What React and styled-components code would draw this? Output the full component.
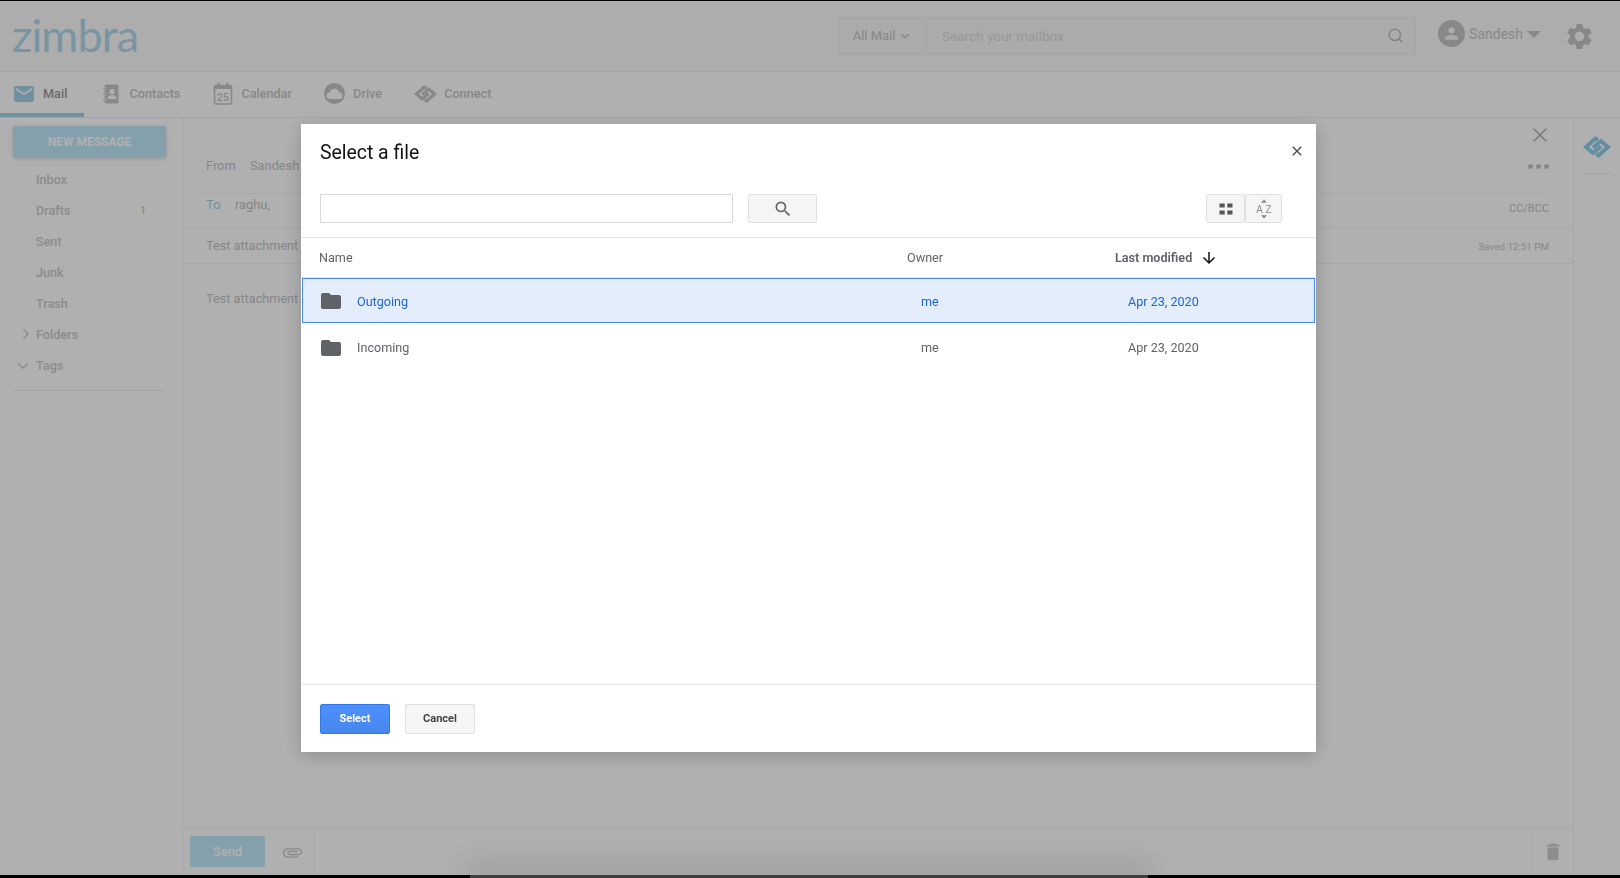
import React from 'react';
import styled, { createGlobalStyle } from 'styled-components';
import { MdEmail, MdFolder, MdSearch, MdClose, MdArrowDownward, MdDelete, MdSettings, MdPerson, MdAttachFile } from 'react-icons/md';
import { FiChevronRight, FiChevronDown, FiSearch, FiX } from 'react-icons/fi';

const GlobalStyle = createGlobalStyle`
  html, body {
    margin: 0;
    padding: 0;
    background: #000;
  }
  body {
    font-family: Roboto, "Liberation Sans", sans-serif;
  }
`;

const Page = styled.div`
  width: 1620px;
  height: 878px;
  display: flex;
  flex-direction: column;
  overflow: hidden;
  background: #fff;
  border-top: 1px solid #000;
  border-bottom: 3px solid #000;
  box-sizing: border-box;
`;

const Header = styled.header`
  height: 71px;
  flex: none;
  display: flex;
  align-items: center;
  box-sizing: border-box;
  padding: 0 25px 0 12px;
  background: #fbfbfb;
  border-bottom: 1px solid #f0f0f0;
  box-shadow: 0 1px 3px rgba(0, 0, 0, 0.04);
`;

const Logo = styled.div`
  font-family: Lato, sans-serif;
  font-weight: 400;
  font-size: 45px;
  line-height: 1;
  letter-spacing: -0.9px;
  color: #b0d8ec;
  margin-top: -2px;
  flex: 1;
`;

const SearchGroup = styled.div`
  width: 578px;
  height: 38px;
  display: flex;
  align-items: center;
  box-sizing: border-box;
  border: 1px solid #f0f0f0;
  background: #f8f8f8;
  margin-top: -1px;
`;

const Scope = styled.div`
  width: 88px;
  height: 100%;
  flex: none;
  display: flex;
  align-items: center;
  justify-content: center;
  gap: 3px;
  font-size: 13px;
  color: #c4c4c4;
  border-right: 1px solid #f0f0f0;
  box-sizing: border-box;
`;

const SearchText = styled.div`
  flex: 1;
  padding-left: 15px;
  font-size: 13.5px;
  color: #dcdcdc;
`;

const SearchIcon = styled.span`
  display: flex;
  margin-right: 11px;
  color: #bdbdbd;
`;

const User = styled.div`
  display: flex;
  align-items: center;
  margin-left: 22px;
  color: #c6c6c6;
  font-size: 14px;
  margin-top: -5px;
`;

const Avatar = styled.div`
  width: 27px;
  height: 27px;
  border-radius: 50%;
  background: #c6c6c6;
  color: #f8f8f8;
  display: flex;
  align-items: center;
  justify-content: center;
  margin-right: 4px;
`;

const Caret = styled.span`
  width: 0;
  height: 0;
  margin-left: 4px;
  margin-top: 2px;
  border-left: 7px solid transparent;
  border-right: 7px solid transparent;
  border-top: 7px solid #c6c6c6;
`;

const GearWrap = styled.div`
  display: flex;
  margin-left: 23px;
  color: #c6c6c6;
`;

const TabBar = styled.nav`
  height: 46px;
  flex: none;
  display: flex;
  background: #fff;
  border-bottom: 1px solid #f0f0f0;
  box-sizing: border-box;
`;

const Tab = styled.div`
  height: 100%;
  box-sizing: border-box;
  display: flex;
  align-items: center;
  padding: 2px ${(p) => p.$right || 15}px 0 ${(p) => p.$left}px;
  gap: ${(p) => p.$gap}px;
  font-size: 12.7px;
  font-weight: 500;
  color: ${(p) => (p.$active ? '#9a9a9a' : '#c6c6c6')};
  border-bottom: 4px solid ${(p) => (p.$active ? '#a6d3e8' : 'transparent')};
  & svg { flex: none; }
`;

const Main = styled.div`
  flex: 1;
  min-height: 0;
  display: flex;
`;

const Sidebar = styled.aside`
  width: 183px;
  flex: none;
  box-sizing: border-box;
  border-right: 1px solid #f4f4f4;
  padding: 8px 16px 0 13px;
`;

const NewMessage = styled.button`
  width: 153px;
  height: 32px;
  border: 0;
  border-radius: 2px;
  background: #bfe8fa;
  color: #fff;
  font: 700 12px Roboto, sans-serif;
  box-shadow: 0 1px 4px rgba(0, 0, 0, 0.15);
  margin-bottom: 6px;
`;

const NavItem = styled.div`
  height: 31px;
  display: flex;
  align-items: center;
  padding: 0 20px 0 23px;
  font-size: 12.6px;
  font-weight: 500;
  color: #cbcbcb;
  position: relative;
`;

const Count = styled.span`
  margin-left: auto;
  font-size: 10px;
`;

const Chevron = styled.span`
  position: absolute;
  left: ${(p) => p.$left}px;
  top: ${(p) => p.$top}px;
  display: flex;
  color: #c4c4c4;
`;

const NavRule = styled.div`
  height: 1px;
  background: #f0f0f0;
  margin-top: 9px;
`;

const Compose = styled.section`
  flex: 1;
  min-width: 0;
  display: flex;
  flex-direction: column;
`;

const FromRow = styled.div`
  height: 76px;
  flex: none;
  box-sizing: border-box;
  margin: 0 24px 0 23px;
  padding-top: 20px;
  display: flex;
  align-items: center;
  font-size: 12.8px;
  color: #c4c4c4;
  border-bottom: 1px solid #f2f2f2;
`;

const ToRow = styled.div`
  height: 33px;
  flex: none;
  box-sizing: border-box;
  margin: 0 24px 0 23px;
  padding-bottom: 12px;
  display: flex;
  align-items: center;
  font-size: 12.8px;
  color: #c4c4c4;
`;

const FieldLabel = styled.span`
  width: ${(p) => p.$width}px;
  font-size: ${(p) => p.$size || 12.8}px;
  color: ${(p) => p.$color || 'inherit'};
`;

const EndNote = styled.span`
  margin-left: auto;
  margin-top: ${(p) => p.$top || 0}px;
  font-size: ${(p) => p.$size}px;
`;

const ComposeTools = styled.div`
  margin-left: auto;
  margin-top: -40px;
  display: flex;
  flex-direction: column;
  align-items: flex-end;
  color: #b0b0b0;
  gap: 17px;
  & > svg { margin-right: -3px; }
`;

const Dots = styled.div`
  display: flex;
  gap: 3px;
  & i {
    width: 5px;
    height: 5px;
    border-radius: 50%;
    background: #c4c4c4;
  }
`;

const SubjectRow = styled.div`
  height: 37px;
  flex: none;
  display: flex;
  align-items: center;
  padding: 0 24px 1px 23px;
  font-size: 12.7px;
  color: #c4c4c4;
  border-top: 1px solid #f2f2f2;
  border-bottom: 1px solid #f2f2f2;
  box-sizing: border-box;
`;

const Body = styled.div`
  flex: 1;
  padding: 27px 23px;
  font-size: 12.7px;
  color: #c4c4c4;
`;

const ComposeFoot = styled.div`
  height: 46px;
  flex: none;
  display: flex;
  align-items: stretch;
  border-top: 1px solid #f4f4f4;
`;

const FootLeft = styled.div`
  width: 132px;
  box-sizing: border-box;
  display: flex;
  align-items: center;
  padding-left: 7px;
  gap: 17px;
  border-right: 1px solid #f4f4f4;
  color: #c6c6c6;
`;

const SendButton = styled.button`
  width: 75px;
  height: 31px;
  border: 0;
  border-radius: 2px;
  background: #bfe8fa;
  color: #fff;
  font: 500 13px Roboto, sans-serif;
  margin-top: -1px;
`;

const Clip = styled(MdAttachFile)`
  transform: rotate(90deg);
`;

const FootRight = styled.div`
  margin-left: auto;
  width: 40px;
  display: flex;
  align-items: center;
  justify-content: center;
  border-left: 1px solid #f4f4f4;
  color: #cccccc;
`;

const Rail = styled.aside`
  width: 47px;
  flex: none;
  box-sizing: border-box;
  border-left: 1px solid #f2f2f2;
  padding-top: 18px;
  display: flex;
  flex-direction: column;
  align-items: center;
`;

const RailRule = styled.div`
  width: 30px;
  height: 1px;
  background: #f0f0f0;
  margin-top: 15px;
`;

/* everything from here on lies over the page */
const Overlay = styled.div`
  position: fixed;
  inset: 1px 0 3px 0;
  background: rgba(0, 0, 0, 0.31);
  padding: 123px 0 0 301px;
  box-sizing: border-box;
`;

const Dialog = styled.div`
  width: 1015px;
  height: 628px;
  background: #fff;
  box-shadow: 0 4px 18px rgba(0, 0, 0, 0.2);
  display: flex;
  flex-direction: column;
  position: relative;
  color: #5f6368;
`;

const Title = styled.h2`
  margin: 0;
  padding: 17px 19px 0;
  height: 70px;
  box-sizing: border-box;
  font-size: 19.4px;
  font-weight: 400;
  line-height: 24px;
  color: #111;
`;

const CloseButton = styled.button`
  position: absolute;
  top: 18px;
  right: 10px;
  width: 18px;
  height: 18px;
  padding: 0;
  border: 0;
  background: none;
  color: #4a4a4a;
  display: flex;
  align-items: center;
  justify-content: center;
`;

const Toolbar = styled.div`
  height: 43px;
  flex: none;
  display: flex;
  align-items: flex-start;
  padding: 0 33px 0 19px;
  border-bottom: 1px solid #e5e5e5;
`;

const FileSearch = styled.input`
  width: 413px;
  height: 29px;
  box-sizing: border-box;
  border: 1px solid #d9d9d9;
  outline: 0;
  margin: 0 15px 0 0;
`;

const GreyButton = styled.button`
  width: ${(p) => p.$width}px;
  height: 29px;
  box-sizing: border-box;
  border: 1px solid #e0e0e0;
  border-radius: 2px;
  background: #f5f5f5;
  color: #666;
  padding: 0;
  display: flex;
  align-items: center;
  justify-content: center;
  margin-left: ${(p) => p.$left || 0}px;
`;

const Row = styled.div`
  display: grid;
  grid-template-columns: 588px 208px 1fr;
  align-items: center;
  height: ${(p) => p.$height}px;
  box-sizing: border-box;
  font-size: 12.6px;
  padding-left: ${(p) => (p.$selected ? 16 : 18)}px;
  padding-top: ${(p) => (p.$selected ? 1 : 0)}px;
  margin: 0 ${(p) => (p.$selected ? 1 : 0)}px;
  color: ${(p) => (p.$selected ? '#1a66d6' : '#5f6368')};
  background: ${(p) => (p.$selected ? '#e4edfb' : 'transparent')};
  border: ${(p) => (p.$selected ? '1px solid #4a8af4' : 0)};
`;

const HeadRow = styled(Row)`
  border-bottom: 1px solid #e5e5e5;
  color: #5f6368;
`;

const SortLabel = styled.span`
  display: flex;
  align-items: center;
  gap: 8px;
  font-weight: 600;
  & svg { color: #111; }
`;

const NameCell = styled.span`
  display: flex;
  align-items: center;
  gap: 14px;
  & svg { color: #5f6368; }
`;

const Indented = styled.span`
  padding-left: ${(p) => p.$pad}px;
`;

const FileList = styled.div`
  flex: 1;
`;

const Footer = styled.div`
  height: 67px;
  flex: none;
  display: flex;
  align-items: center;
  gap: 15px;
  padding: 0 19px;
  border-top: 1px solid #e5e5e5;
`;

const FootButton = styled.button`
  width: 70px;
  height: 30px;
  box-sizing: border-box;
  border-radius: 2px;
  font: 700 11px Roboto, sans-serif;
  border: 1px solid ${(p) => (p.$primary ? '#3079ed' : '#e0e0e0')};
  background: ${(p) => (p.$primary ? 'linear-gradient(#4d90fe, #4787ed)' : '#f5f5f5')};
  color: ${(p) => (p.$primary ? '#fff' : '#444')};
`;

const DockShadow = styled.div`
  position: fixed;
  left: 470px;
  width: 678px;
  bottom: 0;
  height: 3px;
  background: #3f3f3f;
  box-shadow: 0 -6px 26px 4px rgba(0, 0, 0, 0.18);
`;

const ConnectIcon = ({ width, height, color }) => (
  <svg width={width} height={height} viewBox="0 0 28 22" fill="none" stroke={color} strokeWidth="4">
    <path d="M15 4L12.5 2.5L3 11L10 17L18 10.5" />
    <path d="M13 18L15.5 19.5L25 11L18 5L10 11.5" />
  </svg>
);

const ContactsIcon = () => (
  <svg width="16" height="20" viewBox="0 0 16 20">
    <rect x="1.5" y="0.5" width="14" height="19" rx="1.5" fill="#c6c6c6" />
    <rect x="0" y="3.5" width="3" height="2" fill="#c6c6c6" stroke="#fff" strokeWidth="0.5" />
    <rect x="0" y="9" width="3" height="2" fill="#c6c6c6" stroke="#fff" strokeWidth="0.5" />
    <rect x="0" y="14.5" width="3" height="2" fill="#c6c6c6" stroke="#fff" strokeWidth="0.5" />
    <circle cx="9" cy="7.5" r="2.6" fill="#fff" />
    <path d="M4.5 15c0-2.8 2-4 4.5-4s4.5 1.2 4.5 4z" fill="#fff" />
  </svg>
);

const CalendarIcon = () => (
  <svg width="20" height="23" viewBox="0 0 20 23">
    <rect x="1.5" y="3.5" width="17" height="18.5" rx="1.5" fill="none" stroke="#c6c6c6" strokeWidth="1.6" />
    <rect x="1.5" y="3.5" width="17" height="3.5" fill="#c6c6c6" />
    <rect x="4.5" y="0.5" width="2.2" height="4" fill="#c6c6c6" />
    <rect x="13.3" y="0.5" width="2.2" height="4" fill="#c6c6c6" />
    <text x="10" y="19" textAnchor="middle" fontSize="10.5" fontFamily="Roboto, sans-serif" fill="#c6c6c6">25</text>
  </svg>
);

const DriveIcon = () => (
  <svg width="21" height="21" viewBox="0 0 21 21">
    <circle cx="10.5" cy="10.5" r="10.5" fill="#c6c6c6" />
    <path d="M6 16a3.2 3.2 0 0 1-.4-6.4 5 5 0 0 1 9.5-.6 3.5 3.5 0 0 1-.3 7z" fill="#fff" />
  </svg>
);

const GridIcon = () => (
  <svg width="14" height="12" viewBox="0 0 14 12" fill="#555">
    <rect x="0.5" y="0.5" width="5.2" height="4" />
    <rect x="8.3" y="0.5" width="5.2" height="4" />
    <rect x="0.5" y="7.5" width="5.2" height="4" />
    <rect x="8.3" y="7.5" width="5.2" height="4" />
  </svg>
);

const SortIcon = () => (
  <svg width="18" height="22" viewBox="0 0 18 22" fill="#8a8a8a">
    <path d="M9 1.5l3 3.2H6z" />
    <path d="M9 20.5l3-3.2H6z" />
    <text x="4.4" y="15" textAnchor="middle" fontSize="10" fontFamily="Roboto, sans-serif">A</text>
    <text x="13.4" y="15" textAnchor="middle" fontSize="10" fontFamily="Roboto, sans-serif">Z</text>
  </svg>
);

const folders = [
  { name: 'Outgoing', selected: true, height: 45 },
  { name: 'Incoming', selected: false, height: 49 },
];

const navItems = [
  { label: 'Inbox' },
  { label: 'Drafts', count: 1 },
  { label: 'Sent' },
  { label: 'Junk' },
  { label: 'Trash' },
];

const FilePicker = () => (
  <Overlay>
    <Dialog>
      <Title>Select a file</Title>
      <CloseButton>
        <MdClose size={16} />
      </CloseButton>
      <Toolbar>
        <FileSearch />
        <GreyButton $width={69}>
          <MdSearch size={20} />
        </GreyButton>
        <GreyButton $width={39} $left={389}>
          <GridIcon />
        </GreyButton>
        <GreyButton $width={37}>
          <SortIcon />
        </GreyButton>
      </Toolbar>
      <HeadRow $height={40}>
        <span>Name</span>
        <span>Owner</span>
        <SortLabel>
          Last modified <MdArrowDownward size={18} />
        </SortLabel>
      </HeadRow>
      <FileList>
        {folders.map((f) => (
          <Row key={f.name} $selected={f.selected} $height={f.height}>
            <NameCell>
              <MdFolder size={24} />
              {f.name}
            </NameCell>
            <Indented $pad={14}>me</Indented>
            <Indented $pad={13}>Apr 23, 2020</Indented>
          </Row>
        ))}
      </FileList>
      <Footer>
        <FootButton $primary>Select</FootButton>
        <FootButton>Cancel</FootButton>
      </Footer>
    </Dialog>
  </Overlay>
);

export default function App() {
  return (
    <>
      <GlobalStyle />
      <Page>
        <Header>
          <Logo>zimbra</Logo>
          <SearchGroup>
            <Scope>
              All Mail <FiChevronDown size={14} />
            </Scope>
            <SearchText>Search your mailbox</SearchText>
            <SearchIcon>
              <FiSearch size={17} />
            </SearchIcon>
          </SearchGroup>
          <User>
            <Avatar>
              <MdPerson size={19} />
            </Avatar>
            Sandesh
            <Caret />
          </User>
          <GearWrap>
            <MdSettings size={31} />
          </GearWrap>
        </Header>
        <TabBar>
          <Tab $active $left={12} $right={17} $gap={7}>
            <MdEmail size={24} color="#a6d3e8" />
            Mail
          </Tab>
          <Tab $left={19} $gap={10}>
            <ContactsIcon />
            Contacts
          </Tab>
          <Tab $left={18} $gap={8}>
            <CalendarIcon />
            Calendar
          </Tab>
          <Tab $left={17} $gap={8}>
            <DriveIcon />
            Drive
          </Tab>
          <Tab $left={17} $gap={7}>
            <ConnectIcon width={23} height={18} color="#c6c6c6" />
            Connect
          </Tab>
        </TabBar>
        <Main>
          <Sidebar>
            <NewMessage>NEW MESSAGE</NewMessage>
            {navItems.map((n) => (
              <NavItem key={n.label}>
                {n.label}
                {n.count && <Count>{n.count}</Count>}
              </NavItem>
            ))}
            <NavItem>
              <Chevron $left={4} $top={6}>
                <FiChevronRight size={18} strokeWidth={1.5} />
              </Chevron>
              Folders
            </NavItem>
            <NavItem>
              <Chevron $left={1} $top={7}>
                <FiChevronDown size={18} strokeWidth={1.5} />
              </Chevron>
              Tags
            </NavItem>
            <NavRule />
          </Sidebar>
          <Compose>
            <FromRow>
              <FieldLabel $width={44}>From</FieldLabel>
              Sandesh
              <ComposeTools>
                <FiX size={24} strokeWidth={1.5} />
                <Dots>
                  <i />
                  <i />
                  <i />
                </Dots>
              </ComposeTools>
            </FromRow>
            <ToRow>
              <FieldLabel $width={29} $size={13} $color="#a6d3e8">To</FieldLabel>
              raghu,
              <EndNote $size={11} $top={8}>CC/BCC</EndNote>
            </ToRow>
            <SubjectRow>
              Test attachment
              <EndNote $size={9.8} $top={2}>Saved 12:51 PM</EndNote>
            </SubjectRow>
            <Body>Test attachment</Body>
            <ComposeFoot>
              <FootLeft>
                <SendButton>Send</SendButton>
                <Clip size={21} />
              </FootLeft>
              <FootRight>
                <MdDelete size={22} />
              </FootRight>
            </ComposeFoot>
          </Compose>
          <Rail>
            <ConnectIcon width={28} height={22} color="#90cdea" />
            <RailRule />
          </Rail>
        </Main>
      </Page>
      <FilePicker />
      <DockShadow />
    </>
  );
}
